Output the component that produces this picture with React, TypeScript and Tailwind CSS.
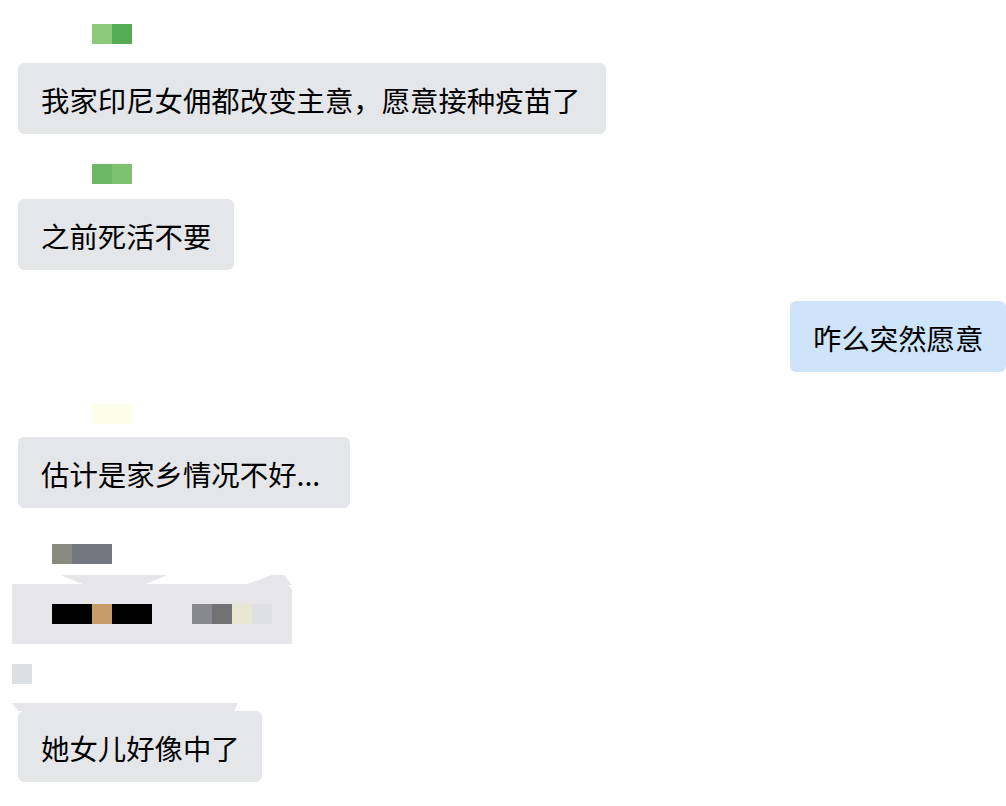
const font = { fontFamily: '"Noto Sans CJK SC", "Noto Sans", sans-serif' };

function Blocks({ colors, className }: { colors: string[]; className: string }) {
  return (
    <div className={`flex h-5 ${className}`}>
      {colors.map((c, i) => (
        <div key={i} className={`h-5 w-5 ${c}`} />
      ))}
    </div>
  );
}

function Bubble({ text, width, tone = "gray", className = "" }: { text: string; width: string; tone?: "gray" | "blue"; className?: string }) {
  const bg = tone === "blue" ? "bg-[#cde4fb]" : "bg-[#e5e6ea]";
  return (
    <div className={`flex h-[71px] items-center rounded-[6px] pl-[23px] pt-[4px] text-[28.4px] leading-none text-black ${bg} ${width} ${className}`}>
      <span className="whitespace-nowrap">{text}</span>
    </div>
  );
}

export default function App() {
  return (
    <div className="min-h-[806px] w-[1006px] overflow-hidden bg-white" style={font}>
      <div className="flex flex-col pt-[24px]">
        <Blocks className="ml-[92px]" colors={["bg-[#8bc97b]", "bg-[#55ad55]"]} />
        <Bubble className="ml-[18px] mt-[19px]" width="w-[588px]" text="我家印尼女佣都改变主意，愿意接种疫苗了" />

        <Blocks className="ml-[92px] mt-[30px]" colors={["bg-[#6cb866]", "bg-[#7ec171]"]} />
        <Bubble className="ml-[18px] mt-[15px]" width="w-[216px]" text="之前死活不要" />

        <Bubble className="ml-[790px] mt-[31px]" width="w-[216px]" tone="blue" text="咋么突然愿意" />

        <Blocks className="ml-[92px] mt-[32px]" colors={["bg-[#fdfee9]", "bg-[#fdfee9]"]} />
        <Bubble className="ml-[18px] mt-[13px]" width="w-[332px]" text="估计是家乡情况不好..." />

        <Blocks className="ml-[52px] mt-[36px]" colors={["bg-[#8a8b80]", "bg-[#737880]", "bg-[#737880]"]} />

        {/* pixelated attachment bubble */}
        <div className="relative ml-[12px] mt-[20px] h-[60px] w-[280px] rounded-tr-[8px] bg-[#e6e6ea]">
          <svg className="absolute left-0 top-[-9px]" width="280" height="10" viewBox="0 0 280 10">
            <polygon points="48,0 156,0 131,10 73,10" fill="#e6e6ea" />
            <polygon points="233,10 260,0 272,0 280,10" fill="#e6e6ea" />
          </svg>
          <div className="flex items-center pl-[40px] pt-[20px]">
            <div className="h-5 w-10 bg-black" />
            <div className="h-5 w-5 bg-[#c89c68]" />
            <div className="h-5 w-10 bg-black" />
            <div className="ml-10 h-5 w-5 bg-[#88888f]" />
            <div className="h-5 w-5 bg-[#727272]" />
            <div className="h-5 w-5 bg-[#e8e8d2]" />
            <div className="h-5 w-5 bg-[#dfe0e4]" />
          </div>
        </div>

        <Blocks className="ml-[12px] mt-[20px]" colors={["bg-[#dde0e3]"]} />

        <div className="relative mt-[19px]">
          <svg className="absolute left-[12px] top-0" width="230" height="8" viewBox="0 0 230 8">
            <polygon points="0,0 226,0 222,8 6,8" fill="#e6e6ea" />
          </svg>
          <Bubble className="ml-[18px] mt-[8px]" width="w-[244px]" text="她女儿好像中了" />
        </div>
      </div>
    </div>
  );
}
